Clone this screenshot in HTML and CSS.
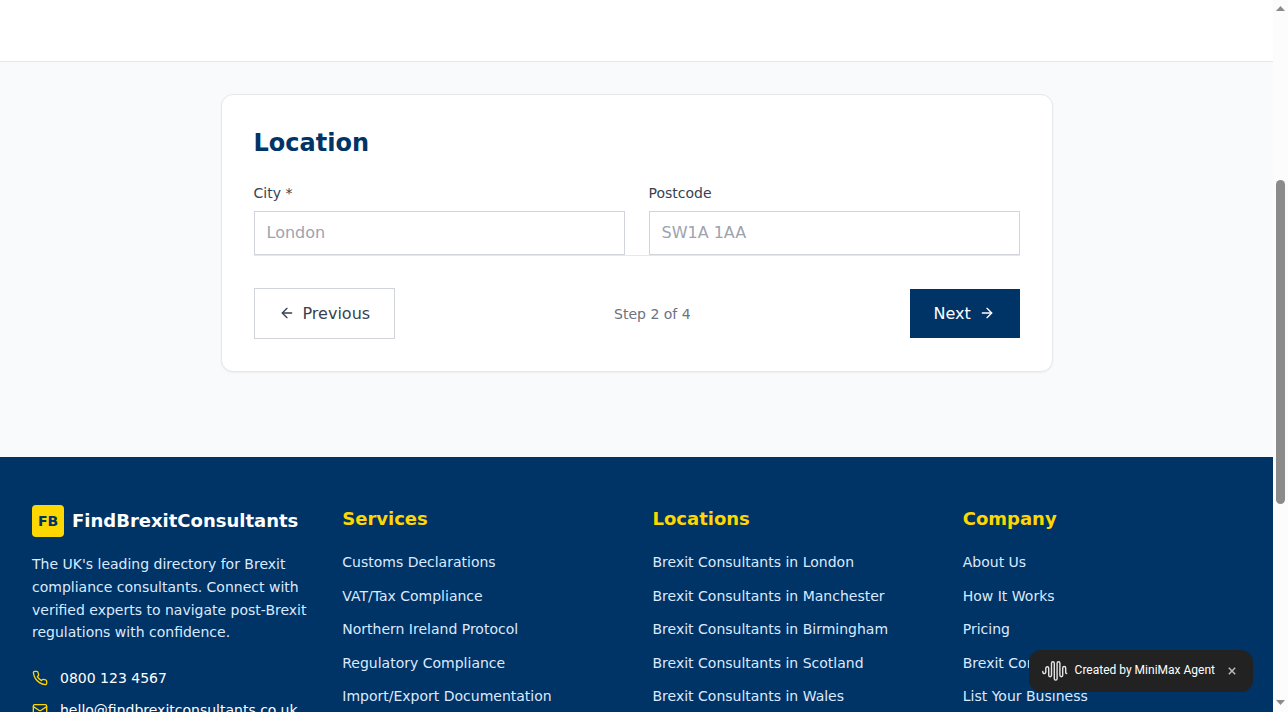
FILE: index.html
```html
<!DOCTYPE html>
<html lang="en">
<head>
<meta charset="utf-8">
<title>Find Brexit Consultants</title>
<link rel="stylesheet" href="styles.css">
</head>
<body>
<div class="window">
  <div class="page">
    <header class="topbar"></header>
    <main class="main">
      <section class="card">
        <h2 class="card-title">Location</h2>
        <div class="fields">
          <label class="field"><span class="field-label">City *</span><input class="input" type="text" placeholder="London"></label>
          <label class="field"><span class="field-label">Postcode</span><input class="input" type="text" placeholder="SW1A 1AA"></label>
        </div>
        <div class="actions">
          <button class="btn btn-outline"><svg class="icon" viewBox="0 0 24 24"><path d="m12 19-7-7 7-7"/><path d="M19 12H5"/></svg>Previous</button>
          <span class="step">Step 2 of 4</span>
          <button class="btn btn-solid">Next<svg class="icon" viewBox="0 0 24 24"><path d="M5 12h14"/><path d="m12 5 7 7-7 7"/></svg></button>
        </div>
      </section>
    </main>
    <footer class="footer">
      <div class="about">
        <div class="brand"><span class="brand-mark">FB</span><span class="brand-name">FindBrexitConsultants</span></div>
        <p class="blurb">The UK's leading directory for Brexit compliance consultants. Connect with verified experts to navigate post-Brexit regulations with confidence.</p>
        <div class="contacts">
          <div class="contact"><svg class="icon" viewBox="0 0 24 24"><path d="M22 16.92v3a2 2 0 0 1-2.18 2 19.79 19.79 0 0 1-8.63-3.07 19.5 19.5 0 0 1-6-6 19.79 19.79 0 0 1-3.07-8.67A2 2 0 0 1 4.11 2h3a2 2 0 0 1 2 1.72 12.84 12.84 0 0 0 .7 2.81 2 2 0 0 1-.45 2.11L8.09 9.91a16 16 0 0 0 6 6l1.27-1.27a2 2 0 0 1 2.11-.45 12.84 12.84 0 0 0 2.81.7A2 2 0 0 1 22 16.92z"/></svg><span>0800 123 4567</span></div>
          <div class="contact"><svg class="icon" viewBox="0 0 24 24"><rect x="2" y="4" width="20" height="16" rx="2"/><path d="m22 7-8.97 5.7a1.94 1.94 0 0 1-2.06 0L2 7"/></svg><span>hello@findbrexitconsultants.co.uk</span></div>
        </div>
      </div>
      <nav>
        <h3 class="col-title">Services</h3>
        <ul class="links"><li><a>Customs Declarations</a></li><li><a>VAT/Tax Compliance</a></li><li><a>Northern Ireland Protocol</a></li><li><a>Regulatory Compliance</a></li><li><a>Import/Export Documentation</a></li></ul>
      </nav>
      <nav>
        <h3 class="col-title">Locations</h3>
        <ul class="links"><li><a>Brexit Consultants in London</a></li><li><a>Brexit Consultants in Manchester</a></li><li><a>Brexit Consultants in Birmingham</a></li><li><a>Brexit Consultants in Scotland</a></li><li><a>Brexit Consultants in Wales</a></li></ul>
      </nav>
      <nav>
        <h3 class="col-title">Company</h3>
        <ul class="links"><li><a>About Us</a></li><li><a>How It Works</a></li><li><a>Pricing</a></li><li><a>Brexit Compliance Guide</a></li><li><a>List Your Business</a></li></ul>
      </nav>
    </footer>
  </div>
  <div class="scrollbar">
    <svg class="arrow" viewBox="0 0 9 5"><path d="M4.5 0 9 5H0z"/></svg>
    <div class="track"><div class="thumb"></div></div>
    <svg class="arrow arrow-down" viewBox="0 0 9 5"><path d="M0 0h9L4.500 5z"/></svg>
  </div>
  <div class="badge">
    <svg class="wave" viewBox="0 0 26 22"><path d="M.8 11.500v.6a1.500 1.500 0 0 0 3 0V8.200a1.450 1.450 0 0 1 2.900 0v7.100a1.400 1.400 0 0 0 2.800 0V3.200a1.400 1.400 0 0 1 2.800 0v15.500a1.400 1.400 0 0 0 2.800 0V3.200a1.400 1.400 0 0 1 2.800 0v12.100a1.400 1.400 0 0 0 2.800 0V8a1.500 1.500 0 0 1 3 0v4.500a1 1 0 0 0 1 1"/></svg>
    <span class="badge-text">Created by MiniMax Agent</span>
    <span class="badge-close"><svg viewBox="0 0 8 8"><path d="m.8.8 6.400 6.400M7.200.8.8 7.200"/></svg></span>
  </div>
</div>
</body>
</html>
```
FILE: styles.css
```css
* { box-sizing: border-box; margin: 0; padding: 0; }
body { font-family: "DejaVu Sans", sans-serif; font-size: 16px; line-height: 1.6; overflow: hidden; }
.window { position: relative; display: flex; width: 1288px; height: 712px; overflow: hidden; }
.page { width: 1273px; background: #f9fafc; }
.topbar { height: 62px; background: #fff; border-bottom: 1px solid #e5e7eb; }
.main { height: 395px; width: 896px; margin: 0 auto; padding: 32px; }
.card { height: 278px; padding: 32px; background: #fff; border: 1px solid #e5e7eb; border-radius: 12px; box-shadow: 0 1px 2px rgba(0, 0, 0, .05); }
.card-title { font-size: 24px; line-height: 32px; color: #003366; margin-bottom: 24px; }
.fields { display: grid; grid-template-columns: 1fr 1fr; gap: 24px; }
.field { display: flex; flex-direction: column; gap: 8px; }
.field-label { font-size: 14px; line-height: 20px; color: #374151; }
.input { width: 100%; height: 44px; padding: 0 12px 2px; border: 1px solid #d1d5db; background: #fff; font: inherit; color: #374151; }
.input::placeholder { color: #9ca3af; opacity: 1; }
.actions { display: flex; align-items: center; justify-content: space-between; margin-right: -.1px; padding-top: 32px; border-top: 1px solid #e5e7eb; }
.btn { display: flex; align-items: center; gap: 8px; padding: 0 24px; font: inherit; border: 0; }
.btn .icon { margin-bottom: 1px; }
.btn-outline { height: 51px; background: #fff; border: 1px solid #d1d5db; color: #374151; }
.btn-solid { width: 110px; height: 49px; padding-right: 0; background: #003366; color: #fff; }
.icon { flex: none; width: 16px; height: 16px; fill: none; stroke: currentColor; stroke-width: 2; stroke-linecap: round; stroke-linejoin: round; }
.btn-solid .icon { margin-left: .5px; }
.step { font-size: 14px; line-height: 20px; color: #6b7280; }
.footer { height: 300px; padding: 48px 32px; display: grid; grid-template-columns: repeat(4, 1fr); gap: 32px; background: #003366; color: #fff; }
.brand { display: flex; align-items: center; gap: 8px; margin-bottom: 16px; }
.brand-mark { display: flex; align-items: center; justify-content: center; width: 32px; height: 32px; border-radius: 4px; background: #ffd700; color: #003366; font-size: 14px; line-height: 20px; font-weight: 700; }
.brand-name { font-size: 18px; line-height: 28px; font-weight: 700; }
.blurb { font-size: 14px; line-height: 22.75px; color: #dbeafe; margin-bottom: 24px; }
.contacts { display: grid; gap: 12px; }
.contact { display: flex; align-items: center; gap: 12px; font-size: 14px; line-height: 20px; }
.contact .icon { color: #ffd700; }
.col-title { font-size: 18px; line-height: 28px; color: #ffd700; margin-bottom: 16px; }
.links { display: grid; gap: 8px; list-style: none; }
.links a { font-size: 14px; line-height: 20px; color: #dbeafe; }
.scrollbar { width: 15px; padding: 6px 3px 7px; display: flex; flex-direction: column; background: #fcfcfc; }
.arrow { width: 9px; height: 5px; fill: #8b8b8b; }
.track { flex: 1; padding-top: 169px; }
.thumb { width: 9px; height: 324px; border-radius: 5px; background: #8b8b8b; }
.badge { position: absolute; right: 35px; bottom: 20px; width: 224px; height: 42px; padding: 0 17px 0 13px; display: flex; align-items: center; border-radius: 12px; background: #222; color: #fff; font: 400 12px/18px Roboto, sans-serif; }
.wave { width: 26px; height: 22px; margin-right: 6.600px; fill: none; stroke: #e4e4e4; stroke-width: 1.4; stroke-linecap: round; }
.badge-text { flex: 1; white-space: nowrap; padding-bottom: 2px; }
.badge-close { display: flex; width: 8px; }
.badge-close svg { width: 8px; height: 8px; fill: none; stroke: #bbb; stroke-width: 1.5; }
```
